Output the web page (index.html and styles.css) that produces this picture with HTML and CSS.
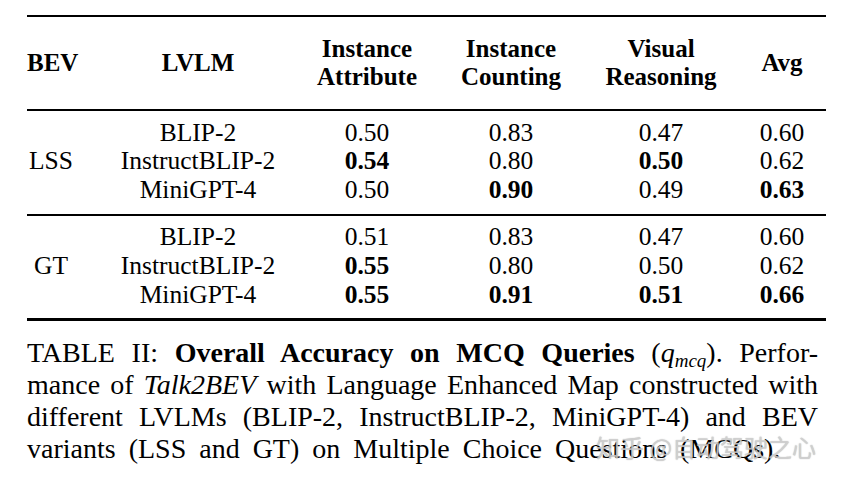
FILE: index.html
```html
<!DOCTYPE html>
<html lang="en">
<head>
<meta charset="utf-8">
<title>Table II</title>
<link rel="stylesheet" href="styles.css">
</head>
<body>
<div class="page">
  <div class="tbl">
    <div class="head">
      <div class="c1">BEV</div>
      <div class="c2">LVLM</div>
      <div class="c3">Instance<br>Attribute</div>
      <div class="c4">Instance<br>Counting</div>
      <div class="c5">Visual<br>Reasoning</div>
      <div class="c6">Avg</div>
    </div>
    <div class="group g1">
      <div class="bev">LSS</div>
      <div class="c2">BLIP-2</div><div>0.50</div><div>0.83</div><div>0.47</div><div class="c6">0.60</div>
      <div class="c2">InstructBLIP-2</div><div class="b">0.54</div><div>0.80</div><div class="b">0.50</div><div class="c6">0.62</div>
      <div class="c2">MiniGPT-4</div><div>0.50</div><div class="b">0.90</div><div>0.49</div><div class="c6 b">0.63</div>
    </div>
    <div class="group g2">
      <div class="bev">GT</div>
      <div class="c2">BLIP-2</div><div>0.51</div><div>0.83</div><div>0.47</div><div class="c6">0.60</div>
      <div class="c2">InstructBLIP-2</div><div class="b">0.55</div><div>0.80</div><div>0.50</div><div class="c6">0.62</div>
      <div class="c2">MiniGPT-4</div><div class="b">0.55</div><div class="b">0.91</div><div class="b">0.51</div><div class="c6 b">0.66</div>
    </div>
  </div>
  <div class="caption">
    <span class="ln">TABLE II: <b>Overall Accuracy on MCQ Queries</b> (<i class="m">q<sub>mcq</sub></i>). Perfor-</span>
    <span class="ln">mance of <i>Talk2BEV</i> with Language Enhanced Map constructed with</span>
    <span class="ln">different LVLMs (BLIP-2, InstructBLIP-2, MiniGPT-4) and BEV</span>
    <span class="ln last">variants (LSS and GT) on Multiple Choice Questions (MCQs).</span>
    <span class="watermark">知乎 @自动驾驶之心</span>
  </div>
</div>
</body>
</html>
```

FILE: styles.css
```css
html, body {
  margin: 0;
  padding: 0;
  background: #fff;
}

.page {
  padding: 15px 0 0 27px;
  font-family: "Liberation Serif", "Times New Roman", serif;
  color: #000;
}

.tbl {
  width: 799px;
  border-top: 2px solid #000;
  border-bottom: 3px solid #000;
}

.head,
.group {
  display: grid;
  grid-template-columns: 48px 240px 104px 184px 116px 107px;
  text-align: center;
}

.head {
  height: 92px;
  align-items: center;
  font-weight: bold;
  font-size: 25px;
  line-height: 28px;
  border-bottom: 2px solid #000;
}

.group {
  grid-template-rows: repeat(3, 28.75px);
  font-size: 25.5px;
  line-height: 28.75px;
  white-space: nowrap;
}

.g1 {
  padding: 7.6px 0 9.2px;
  border-bottom: 2px solid #000;
}

.g2 {
  padding: 7.1px 0 8.7px;
}

.bev {
  grid-row: 1 / 4;
  align-self: center;
}

.c2 { padding-left: 6px; }
.c6 { padding-left: 19px; }
.b { font-weight: bold; }

.caption {
  position: relative;
  width: 791px;
  margin-top: 16px;
  font-size: 28px;
  line-height: 32px;
}

.ln {
  display: block;
  text-align: justify;
  text-align-last: justify;
  white-space: nowrap;
}

.ln.last {
  text-align-last: left;
  word-spacing: 6px;
}

.m {
  font-style: italic;
}

.m sub {
  font-size: 19px;
  line-height: 0;
  vertical-align: -5px;
}

.watermark {
  position: absolute;
  left: 569px;
  top: 94px;
  font-family: "Noto Sans CJK SC", "Noto Sans", sans-serif;
  font-size: 24px;
  line-height: 32px;
  color: rgba(215, 215, 215, 0.75);
  text-shadow: 0 0 1px rgba(120, 120, 120, 0.6);
  white-space: nowrap;
}
```
